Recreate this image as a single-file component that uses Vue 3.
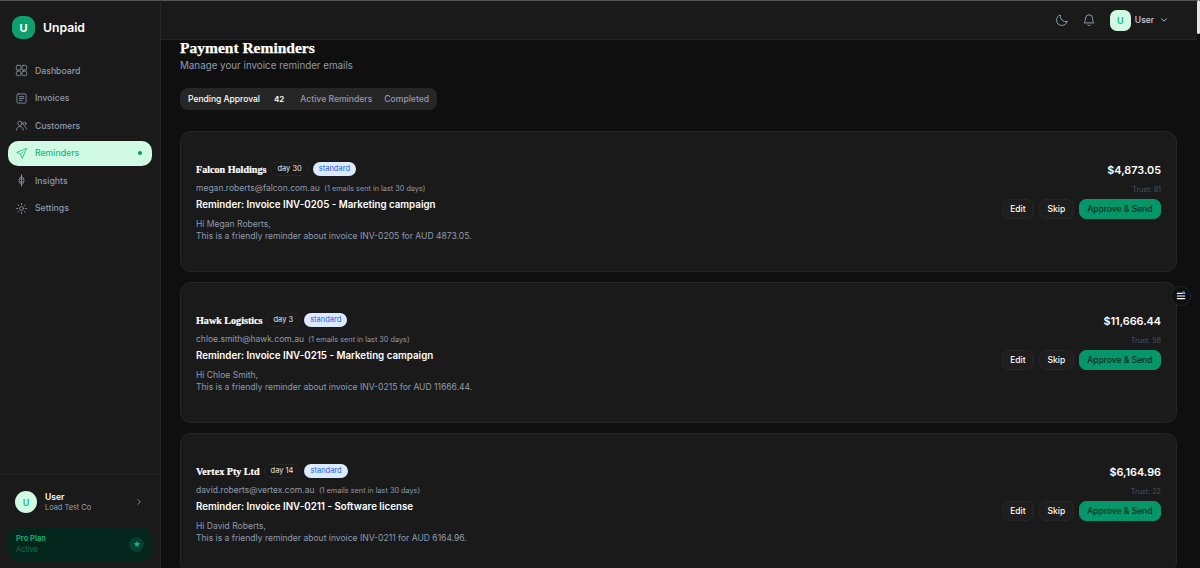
<script setup>
const navItems = [
  { label: 'Dashboard', icon: 'grid' },
  { label: 'Invoices', icon: 'doc' },
  { label: 'Customers', icon: 'users' },
  { label: 'Reminders', icon: 'send', active: true },
  { label: 'Insights', icon: 'insight' },
  { label: 'Settings', icon: 'gear' }
]

const tabs = [
  { label: 'Pending Approval', count: 42, active: true },
  { label: 'Active Reminders' },
  { label: 'Completed' }
]

const reminders = [
  { company: 'Falcon Holdings', day: 30, email: 'megan.roberts@falcon.com.au', invoice: 'INV-0205', job: 'Marketing campaign', name: 'Megan Roberts', raw: '4873.05', amount: '$4,873.05', trust: 81 },
  { company: 'Hawk Logistics', day: 3, email: 'chloe.smith@hawk.com.au', invoice: 'INV-0215', job: 'Marketing campaign', name: 'Chloe Smith', raw: '11666.44', amount: '$11,666.44', trust: 58 },
  { company: 'Vertex Pty Ltd', day: 14, email: 'david.roberts@vertex.com.au', invoice: 'INV-0211', job: 'Software license', name: 'David Roberts', raw: '6164.96', amount: '$6,164.96', trust: 22 }
]
</script>

<template>
  <div class="app">
    <aside class="sidebar">
      <div class="brand">
        <div class="brand-mark">U</div>
        <span class="brand-name">Unpaid</span>
      </div>

      <nav class="nav">
        <a v-for="item in navItems" :key="item.label" class="nav-item" :class="{ active: item.active }">
          <svg class="nav-icon" viewBox="0 0 24 24" fill="none" stroke="currentColor" stroke-width="1.5" stroke-linecap="round" stroke-linejoin="round">
            <template v-if="item.icon === 'grid'">
              <rect x="2.500" y="2.500" width="8.500" height="8.500" rx="2" />
              <rect x="13" y="2.500" width="8.500" height="8.500" rx="2" />
              <rect x="2.500" y="13" width="8.500" height="8.500" rx="2.500" />
              <rect x="13" y="13" width="8.500" height="8.500" rx="2.500" />
            </template>
            <template v-else-if="item.icon === 'doc'">
              <rect x="3.500" y="3.500" width="17" height="17" rx="2.500" />
              <path d="M8 8.500h8M8 12h8M8 15.500h5" />
            </template>
            <template v-else-if="item.icon === 'users'">
              <circle cx="9" cy="8" r="4" />
              <path d="M2.500 20.500c.5-4 3-6.500 6.500-6.500s6 2.500 6.500 6.500" />
              <circle cx="17.500" cy="8.500" r="2.800" />
              <path d="M18 14c2 .5 3.300 2.200 3.700 4.500" />
            </template>
            <template v-else-if="item.icon === 'send'">
              <path d="M21 3 3 10l7 3.500L13.500 21 21 3Z" />
              <path d="M10 13.500 15 9" />
            </template>
            <template v-else-if="item.icon === 'insight'">
              <path d="M12 1.500v21" />
              <path d="M12 4c3 2.200 4.500 5 4.500 8s-1.500 5.800-4.500 8c-3-2.200-4.500-5-4.500-8s1.500-5.800 4.500-8Z" />
              <path d="M8.500 9.500h7M8.500 14.500h7" />
            </template>
            <template v-else>
              <circle cx="12" cy="12" r="3.500" />
              <path d="M12 2.500v2.500M12 19v2.500M2.500 12H5M19 12h2.500M5.300 5.300l1.800 1.800M16.900 16.900l1.800 1.800M5.300 18.700l1.800-1.800M16.900 7.100l1.800-1.800" />
            </template>
          </svg>
          <span>{{ item.label }}</span>
          <i v-if="item.active" class="nav-dot"></i>
        </a>
      </nav>

      <div class="sidebar-foot">
        <div class="account">
          <div class="avatar round">U</div>
          <div class="account-text">
            <div class="account-name">User</div>
            <div class="account-org">Load Test Co</div>
          </div>
          <svg class="account-chev" viewBox="0 0 24 24" fill="none" stroke="currentColor" stroke-width="2" stroke-linecap="round" stroke-linejoin="round">
            <path d="m9 6 6 6-6 6" />
          </svg>
        </div>
        <div class="plan">
          <div>
            <div class="plan-name">Pro Plan</div>
            <div class="plan-state">Active</div>
          </div>
          <div class="plan-badge">
            <svg viewBox="0 0 24 24" fill="currentColor"><path d="m12 3 2.800 5.900 6.400.8-4.700 4.400 1.200 6.400-5.700-3.100-5.700 3.100 1.200-6.400-4.700-4.400 6.400-.8L12 3Z" /></svg>
          </div>
        </div>
      </div>
    </aside>

    <div class="main">
      <header class="topbar">
        <svg class="top-icon" viewBox="0 0 24 24" fill="none" stroke="currentColor" stroke-width="1.600" stroke-linecap="round" stroke-linejoin="round">
          <path d="M20.500 14.500A9 9 0 0 1 9.500 3.500a9 9 0 1 0 11 11Z" />
        </svg>
        <svg class="top-icon" viewBox="0 0 24 24" fill="none" stroke="currentColor" stroke-width="1.600" stroke-linecap="round" stroke-linejoin="round">
          <path d="M6 9a6 6 0 0 1 12 0c0 6 2.500 8 2.500 8h-17S6 15 6 9Z" />
          <path d="M10 20.500a2.200 2.200 0 0 0 4 0" />
        </svg>
        <div class="top-user">
          <div class="avatar">U</div>
          <span>User</span>
          <svg viewBox="0 0 24 24" fill="none" stroke="currentColor" stroke-width="2" stroke-linecap="round" stroke-linejoin="round">
            <path d="m6 9 6 6 6-6" />
          </svg>
        </div>
      </header>

      <main class="content">
        <h1>Payment Reminders</h1>
        <p class="subtitle">Manage your invoice reminder emails</p>

        <div class="tabs">
          <button v-for="tab in tabs" :key="tab.label" class="tab" :class="{ active: tab.active }">
            {{ tab.label }}
            <span v-if="tab.count" class="tab-count">{{ tab.count }}</span>
          </button>
        </div>

        <section v-for="r in reminders" :key="r.invoice" class="card">
          <div class="card-body">
            <div class="card-title">
              <strong>{{ r.company }}</strong>
              <span class="pill day">day {{ r.day }}</span>
              <span class="pill tier">standard</span>
            </div>
            <div class="card-mail">{{ r.email }} <small>(1 emails sent in last 30 days)</small></div>
            <div class="card-subject">Reminder: Invoice {{ r.invoice }} - {{ r.job }}</div>
            <p class="card-copy">Hi {{ r.name }},<br />This is a friendly reminder about invoice {{ r.invoice }} for AUD {{ r.raw }}.</p>
          </div>
          <div class="card-side">
            <div class="amount">{{ r.amount }}</div>
            <div class="trust">Trust: {{ r.trust }}</div>
            <div class="actions">
              <button class="btn">Edit</button>
              <button class="btn">Skip</button>
              <button class="btn primary">Approve &amp; Send</button>
            </div>
          </div>
        </section>
      </main>

      <button class="float-btn" aria-label="Open menu">
        <i class="float-dot"></i>
        <svg viewBox="0 0 16 16" fill="none" stroke="currentColor" stroke-width="1.400" stroke-linecap="round">
          <path d="M3 4.500h10M3 8h10M3 11.500h10" />
        </svg>
      </button>
    </div>
    <div class="scrollbar"><i></i></div>
  </div>
</template>

<style>
html, body {
  margin: 0;
  height: 100%;
  overflow: hidden;
  background: #0f0f0f;
}
</style>

<style scoped>
.app {
  display: flex;
  height: 568px;
  overflow: hidden;
  font-family: 'Inter', 'Noto Sans', sans-serif;
  color: #fff;
  background: #0f0f0f;
}

.sidebar {
  flex: 0 0 161px;
  box-sizing: border-box;
  display: flex;
  flex-direction: column;
  background: #1a1a1a;
  border-right: 1px solid #262626;
  border-top: 1px solid #555;
}

.brand {
  display: flex;
  align-items: center;
  gap: 8px;
  padding: 15px 12px 0;
  height: 23px;
}

.brand-mark {
  width: 23px;
  height: 23px;
  border-radius: 9px;
  display: flex;
  align-items: center;
  justify-content: center;
  background: #0d9f6e;
  font-size: 11px;
  font-weight: 700;
}

.brand-name {
  font-size: 12.200px;
  font-weight: 600;
  margin-top: -1px;
}

.nav {
  display: flex;
  flex-direction: column;
  gap: 2px;
  padding: 0 8px;
  margin-top: 19px;
}

.nav-item {
  display: flex;
  align-items: center;
  gap: 7px;
  height: 25.500px;
  padding: 0 7px;
  border-radius: 10px;
  color: #8f9bae;
  font-size: 8.700px;
  font-weight: 500;
}

.nav-item.active {
  background: #d1fae5;
  color: #10b981;
}

.nav-icon {
  width: 13px;
  height: 13px;
  flex: none;
}

.nav-dot {
  width: 4px;
  height: 4px;
  border-radius: 50%;
  background: #059669;
  margin-left: auto;
  margin-right: 3px;
}

.sidebar-foot {
  margin-top: auto;
  border-top: 1px solid #262626;
  padding: 16px 8px 7px;
}

.account {
  display: flex;
  align-items: center;
  gap: 8px;
  padding: 0 7px;
}

.account-text {
  flex: 1;
  min-width: 0;
}

.account-name {
  font-size: 8.500px;
  font-weight: 600;
  line-height: 11px;
  padding-top: 1px;
}

.account-org {
  font-size: 7.400px;
  line-height: 10px;
  color: #94a3b8;
}

.account-chev {
  width: 10px;
  height: 10px;
  color: #94a3b8;
  margin-right: 1px;
}

.avatar {
  width: 21px;
  height: 21px;
  flex: none;
  display: flex;
  align-items: center;
  justify-content: center;
  border-radius: 7px;
  background: #d1fae5;
  color: #10b981;
  font-size: 9px;
  font-weight: 600;
}

.avatar.round {
  width: 22px;
  height: 22px;
  border-radius: 50%;
}

.plan {
  display: flex;
  align-items: center;
  justify-content: space-between;
  margin-top: 14px;
  height: 34px;
  padding: 0 8px;
  border-radius: 10px;
  background: #03251c;
}

.plan-name {
  font-size: 7.500px;
  font-weight: 600;
  line-height: 11px;
  color: #10b981;
}

.plan-state {
  font-size: 7.500px;
  line-height: 11px;
  color: #047857;
}

.plan-badge {
  width: 15px;
  height: 15px;
  border-radius: 50%;
  display: flex;
  align-items: center;
  justify-content: center;
  background: #064034;
  color: #10b981;
}

.plan-badge svg {
  width: 8px;
  height: 8px;
}

.main {
  flex: 1;
  min-width: 0;
  position: relative;
  display: flex;
  flex-direction: column;
}

.topbar {
  flex: 0 0 40px;
  box-sizing: border-box;
  display: flex;
  align-items: center;
  justify-content: flex-end;
  gap: 13px;
  padding-right: 28px;
  background: #1a1a1a;
  border-bottom: 1px solid #1e2533;
  border-top: 1px solid #555;
  color: #94a3b8;
}

.top-icon {
  width: 14px;
  height: 14px;
}

.top-user {
  display: flex;
  align-items: center;
  gap: 5px;
  margin-left: 1px;
  font-size: 8.500px;
  font-weight: 500;
  color: #cbd5e1;
}

.top-user .avatar {
  margin-right: -1px;
}

.top-user svg {
  width: 10px;
  height: 10px;
}

.content {
  flex: 1;
  min-height: 0;
  overflow: hidden;
  padding: 0 20px 0 19px;
}

h1 {
  margin: 0;
  font-family: 'Liberation Serif', serif;
  font-size: 15.500px;
  font-weight: 700;
  line-height: 16px;
  -webkit-text-stroke: 0.25px #fff;
}

.subtitle {
  margin: 2px 0 0;
  font-size: 9.800px;
  line-height: 16px;
  color: #8f9bae;
}

.tabs {
  display: inline-flex;
  align-items: center;
  gap: 12px;
  height: 22px;
  margin: 14px 0 21px;
  padding-right: 8px;
  background: #262626;
  border-radius: 8px;
  vertical-align: top;
}

.tab {
  border: 0;
  background: none;
  padding: 0;
  font: inherit;
  font-size: 8.600px;
  font-weight: 500;
  color: #8f9bae;
}

.tab.active {
  display: flex;
  align-items: center;
  color: #fff;
  font-size: 8.500px;
  padding-left: 8px;
}

.tab-count {
  margin-left: 14px;
  font-size: 8px;
  font-weight: 600;
  padding-right: 4px;
}

.card {
  box-sizing: border-box;
  height: 141px;
  margin-bottom: 10px;
  display: flex;
  justify-content: space-between;
  padding: 30px 15px 0;
  background: #1a1a1a;
  border: 1px solid #262626;
  border-radius: 11px;
}

.card-title {
  display: flex;
  align-items: center;
  gap: 4px;
  height: 14px;
}

.card-title strong {
  font-family: 'Liberation Serif', serif;
  font-size: 10.100px;
  -webkit-text-stroke: 0.2px #fff;
}

.pill {
  border-radius: 9px;
  font-size: 7.500px;
  line-height: 14px;
  padding: 0 6px;
}

.day {
  border: 1px solid #262626;
  line-height: 12px;
  color: #e5e5e5;
}

.tier {
  background: #dbeafe;
  color: #2563eb;
}

.card-mail {
  margin-top: 6px;
  font-size: 8.500px;
  line-height: 12px;
  color: #8f9bae;
}

.card-mail small {
  font-size: 7.300px;
  margin-left: 2px;
}

.card-subject {
  margin-top: 2px;
  font-size: 9.750px;
  font-weight: 600;
  line-height: 16px;
}

.card-copy {
  margin: 5px 0 0;
  font-size: 8.550px;
  line-height: 12px;
  color: #8f9bae;
}

.card-side {
  text-align: right;
}

.amount {
  font-size: 10.800px;
  font-weight: 600;
  line-height: 16px;
  margin-top: 1px;
}

.trust {
  margin-top: 6px;
  font-size: 7.200px;
  line-height: 10px;
  color: #475569;
}

.actions {
  display: flex;
  justify-content: flex-end;
  gap: 5px;
  margin-top: 4px;
}

.btn {
  height: 20px;
  padding: 0 7.500px;
  border: 1px solid #262626;
  border-radius: 7px;
  background: #1e1e1e;
  color: #fff;
  font: inherit;
  font-size: 8.500px;
  font-weight: 500;
}

.btn.primary {
  background: #059669;
  border-color: #059669;
  color: #022c22;
}

.float-btn {
  position: absolute;
  top: 286px;
  right: 6px;
  width: 20px;
  height: 20px;
  padding: 0;
  display: flex;
  align-items: center;
  justify-content: center;
  border: 1px solid #262626;
  border-radius: 50%;
  background: #0f0f0f;
  color: #fff;
}

.float-btn svg {
  width: 12px;
  height: 12px;
}

.float-dot {
  position: absolute;
  top: 4px;
  right: 5px;
  width: 3px;
  height: 3px;
  border-radius: 50%;
  background: #3b82f6;
}

.scrollbar {
  flex: 0 0 3px;
  background: #0f0f0f;
}

.scrollbar i {
  display: block;
  height: 34px;
  background: #e5e5e5;
  border-radius: 2px;
}
</style>
